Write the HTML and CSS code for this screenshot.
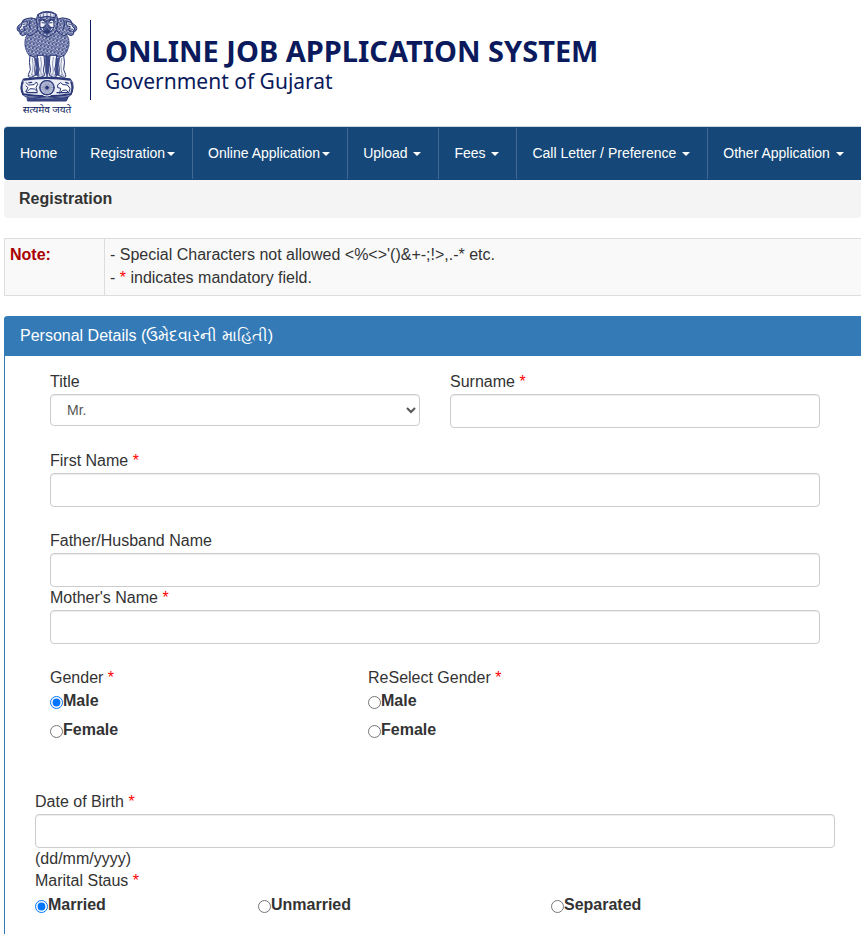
FILE: index.html
```html
<!DOCTYPE html>
<html lang="en">
<head>
<meta charset="utf-8">
<title>Online Job Application System</title>
<link rel="stylesheet" href="styles.css">
</head>
<body>
<header class="masthead">
  <div class="emblem">
    <svg class="emblem-art" viewBox="48 30 186 276" fill="none" stroke="#2a3878" stroke-width="3" stroke-linecap="round" stroke-linejoin="round" aria-hidden="true">
      <defs>
        <pattern id="mane" width="11" height="12" patternUnits="userSpaceOnUse" patternTransform="rotate(12)">
          <rect width="11" height="12" fill="#3d4a88" stroke="none"/>
          <path d="M1 1l4 6 5-6M0 8l3 3M11 8l-3 3" stroke="#e3e6f1" stroke-width="2.4"/>
        </pattern>
      </defs>
      <path d="M84 100Q72 113 75 138Q78 158 90 170L190 170Q203 157 207 138Q210 113 196 100L170 76L112 76Z" fill="url(#mane)" stroke-width="2"/>
      <path d="M111 58Q94 50 79 56Q68 57 65 69L54 78Q49 85 53 92L59 95Q58 105 68 107L80 102Q89 112 101 101L114 91Z" fill="url(#mane)"/>
      <path d="M171 58Q187 50 202 56Q213 57 216 69L228 78Q233 85 228 92L222 95Q223 105 213 107L202 102Q192 112 181 101L168 91Z" fill="url(#mane)"/>
      <path d="M68 67L82 65L80 77L70 80L75 91L63 94L57 87L63 80ZM213 67L199 65L201 77L211 80L206 91L218 94L225 87L218 80Z" fill="#eef0f7"/>
      <path d="M69 73l7-1M63 88l8-1M213 73l-7-1M219 88l-8-1M90 62q-7 13 1 25M191 62q7 13-1 25"/>
      <path d="M114 43Q126 33 141 35Q157 33 169 43L174 61L170 89Q161 107 141 111Q121 106 113 89L109 61Z" fill="url(#mane)"/>
      <path d="M116 43Q141 30 167 43L165 53Q141 45 118 53Z" fill="#e4e7f2"/>
      <path d="M121 45v6M130 41v7M141 40v8M152 41v7M162 45v6" stroke-width="2"/>
      <path d="M121 57L138 60L138 75L131 80Q126 89 135 91L141 88L147 91Q157 89 151 80L144 75L144 60L161 57L162 79Q156 98 141 99Q126 98 120 79Z" fill="#f4f5fa"/>
      <path d="M121 62Q130 56 136 66M146 66Q152 56 161 62" stroke-width="4"/>
      <path d="M126 68l8 1M148 69l8-1M135 76q6 7 12 0M124 82q8 0 17 3 9-3 17-3" stroke-width="3"/>
      <path d="M130 93Q141 88 152 93L148 98Q141 101 134 98Z" fill="#2a3878"/>
      <path d="M90 166L104 173Q108 192 104 209L106 226L91 233Q82 232 85 224L91 209Q86 187 90 166ZM191 166L178 173Q174 192 178 209L176 226L191 233Q200 232 197 224L191 209Q196 187 191 166Z" fill="#f3f5fa"/>
      <path d="M112 166L132 166Q137 190 130 211L134 226L120 233Q110 231 113 223L118 209Q112 188 112 166ZM170 166L150 166Q145 190 152 211L148 226L162 233Q172 231 169 223L164 209Q170 188 170 166Z" fill="#f3f5fa"/>
      <path d="M136 168L136 214L141 231L147 214L147 168ZM105 174L109 202L105 226L116 226L114 175ZM177 174L174 202L177 226L166 226L168 175Z" fill="#3d4a88" stroke="#3d4a88" stroke-width="2"/>
      <path d="M97 175q4 20 1 38l-4 12M185 175q-4 20-1 38l4 12M122 172q5 20 0 41l2 12M160 172q-5 20 0 41l-2 12M89 226l2 5M98 223l1 6M191 226l-2 5M184 223l-1 6M119 224l1 6M128 222l1 6M163 224l-1 6M154 222l-1 6" stroke-width="1.5"/>
      <path d="M71 237Q141 226 211 237L218 248Q222 264 216 278L207 290Q141 298 75 290L65 278Q60 264 65 248Z" fill="#eceef6" stroke-width="3"/>
      <path d="M72 239Q141 229 210 239M69 283Q141 295 212 283" stroke-width="6"/>
      <path d="M69 246Q61 262 69 281M213 246Q220 262 213 281" stroke-width="5"/>
      <circle cx="141" cy="263" r="25" fill="#3d4a88" stroke="#f3f5fa" stroke-width="3"/>
      <circle cx="141" cy="263" r="21" fill="#c3c8de" stroke-width="3"/>
      <path d="M141 243v40M121 263h40M127 249l28 28M127 277l28-28M133 244l16 38M149 244l-16 38M122 255l38 16M122 271l38-16" stroke-width="1"/>
      <circle cx="141" cy="263" r="4" fill="#2a3878"/>
      <path d="M78 248l8 7 16-1 7-8 4 7-5 9 4 13-8-8-14-1-9 9-4 0 7-12-6-5M174 254l8-6 7 6 13 1 8 10-4 14-7-9-11 1-9 9 3-15-8-2Z" fill="#fff" stroke-width="3"/>
      <path d="M81 278h30M171 278h31M87 248l8-1M197 247l8 3" stroke-width="4"/>
      <path d="M82 293Q141 302 204 292L199 303H84Z" fill="#3d4a88"/>
    </svg>
    <span class="motto" lang="hi">सत्यमेव जयते</span>
  </div>
  <div class="brand">
    <h1 class="brand-name">ONLINE JOB APPLICATION SYSTEM</h1>
    <p class="brand-sub">Government of Gujarat</p>
  </div>
</header>

<nav class="navbar">
  <a href="#">Home</a>
  <a href="#">Registration<span class="caret"></span></a>
  <a href="#">Online Application<span class="caret"></span></a>
  <a href="#">Upload <span class="caret"></span></a>
  <a href="#">Fees <span class="caret"></span></a>
  <a href="#">Call Letter / Preference <span class="caret"></span></a>
  <a href="#">Other Application <span class="caret"></span></a>
</nav>

<main>
  <h2 class="page-title">Registration</h2>

  <table class="note">
    <tr>
      <th scope="row">Note:</th>
      <td>- Special Characters not allowed &lt;%&lt;&gt;'()&amp;+-;!&gt;,.-* etc.<br>- <span class="req">*</span> indicates mandatory field.</td>
    </tr>
  </table>

  <form class="panel">
    <h3 class="panel-heading">Personal Details (<span lang="gu">ઉમેદવારની માહિતી</span>)</h3>
    <div class="panel-body">
      <div class="inset">
        <div class="two-up">
          <div class="field">
            <label for="title">Title</label>
            <select id="title" class="control"><option>Mr.</option></select>
          </div>
          <div class="field">
            <label for="surname">Surname <span class="req">*</span></label>
            <input id="surname" class="control" type="text">
          </div>
        </div>
        <div class="field">
          <label for="first">First Name <span class="req">*</span></label>
          <input id="first" class="control" type="text">
        </div>
        <div class="parents">
          <div class="field">
            <label for="father">Father/Husband Name</label>
            <input id="father" class="control" type="text">
          </div>
          <div class="field">
            <label for="mother">Mother's Name <span class="req">*</span></label>
            <input id="mother" class="control" type="text">
          </div>
        </div>
        <div class="genders">
          <fieldset>
            <legend>Gender <span class="req">*</span></legend>
            <label class="choice"><input type="radio" name="gender" checked>Male</label>
            <label class="choice"><input type="radio" name="gender">Female</label>
          </fieldset>
          <fieldset>
            <legend>ReSelect Gender <span class="req">*</span></legend>
            <label class="choice"><input type="radio" name="gender2">Male</label>
            <label class="choice"><input type="radio" name="gender2">Female</label>
          </fieldset>
        </div>
      </div>
      <div class="field">
        <label for="dob">Date of Birth <span class="req">*</span></label>
        <input id="dob" class="control" type="text">
        <span class="hint">(dd/mm/yyyy)</span>
      </div>
      <fieldset>
        <legend>Marital Staus <span class="req">*</span></legend>
        <div class="marital">
          <label class="choice"><input type="radio" name="marital" checked>Married</label>
          <label class="choice"><input type="radio" name="marital">Unmarried</label>
          <label class="choice"><input type="radio" name="marital">Separated</label>
        </div>
      </fieldset>
    </div>
  </form>
</main>
</body>
</html>
```
FILE: styles.css
```css
* {
  box-sizing: border-box;
}

body {
  margin: 0;
  padding-left: 4px;
  overflow-x: hidden;
  background: #fff;
  color: #333;
  font-family: "Liberation Sans", Arial, sans-serif;
  font-size: 16px;
  line-height: 22px;
}

h1, h2, h3, p {
  margin: 0;
}

.masthead {
  display: flex;
  align-items: flex-start;
  height: 126px;
  padding: 10px 0 0 12px;
  color: #0a1a5c;
}

.emblem {
  display: flex;
  flex-direction: column;
  align-items: center;
  width: 62px;
}

.emblem-art {
  display: block;
  width: 62px;
  height: 92px;
}

.motto {
  font-family: "Noto Sans Devanagari", "Noto Sans", sans-serif;
  font-size: 10px;
  line-height: 18px;
  white-space: nowrap;
}

.brand {
  margin: 10px 0 0 12px;
  padding: 14px 0 0 14px;
  height: 80px;
  border-left: 1px solid #0a1a5c;
  font-family: "Noto Sans", "Open Sans", sans-serif;
  white-space: nowrap;
}

.brand-name {
  font-size: 29px;
  font-weight: 700;
  line-height: 34px;
}

.brand-sub {
  font-size: 21px;
  line-height: 26px;
}

.navbar {
  display: flex;
  height: 54px;
  padding: 1px;
  overflow: hidden;
  border-top: 1px solid #d0d7de;
  border-radius: 4px 0 0 4px;
  background: #154878;
}

.navbar a {
  flex: none;
  padding: 0 17px 0 15px;
  border-right: 1px solid #416a93;
  color: #fff;
  font-size: 14px;
  line-height: 50px;
  text-decoration: none;
  white-space: nowrap;
}

.navbar a:last-child {
  border-right: 0;
}

.caret {
  display: inline-block;
  margin-left: 2px;
  vertical-align: middle;
  border-top: 4px solid #fff;
  border-right: 4px solid transparent;
  border-left: 4px solid transparent;
}

.page-title {
  padding: 8px 15px;
  border-radius: 4px;
  background: #f4f4f4;
  font-size: 16px;
  line-height: 22px;
}

.note {
  width: 100%;
  margin: 20px 0;
  border: 1px solid #ddd;
  border-right: 0;
  border-spacing: 0;
  background: #f9f9f9;
  line-height: 23px;
}

.note th,
.note td {
  padding: 4px 5px 6px;
  text-align: left;
  vertical-align: top;
}

.note th {
  width: 100px;
  border-right: 1px solid #ddd;
  color: #a90000;
}

.req {
  color: #f00;
}

.panel {
  border-left: 1px solid #337ab7;
  border-radius: 4px 0 0 0;
}

.panel-heading {
  height: 40px;
  margin-left: -1px;
  padding: 0 16px;
  border-radius: 4px 0 0 0;
  background: #337ab7;
  color: #fff;
  font-size: 16px;
  font-weight: 400;
  line-height: 40px;
}

.panel-body {
  padding: 15px 26px 20px 30px;
}

.inset {
  padding: 0 15px;
}

.two-up {
  display: grid;
  grid-template-columns: 1fr 1fr;
  gap: 30px;
  margin-bottom: 22px;
}

.field label {
  display: block;
  margin-bottom: 1px;
}

.control {
  display: block;
  width: 100%;
  height: 34px;
  padding: 6px 12px;
  border: 1px solid #ccc;
  border-radius: 4px;
  background-color: #fff;
  box-shadow: inset 0 1px 1px rgba(0, 0, 0, 0.075);
  color: #555;
  font-family: inherit;
  font-size: 14px;
}

select.control {
  height: 32px;
  padding: 0 0 0 12px;
}

.parents {
  margin: 23px 0;
}

.hint {
  display: block;
}

fieldset {
  min-width: 0;
  margin: 0;
  padding: 0;
  border: 0;
}

legend {
  margin-bottom: 1px;
  padding: 0;
}

.genders {
  display: grid;
  grid-template-columns: 318px 1fr;
  margin-bottom: 43px;
}

.choice {
  display: flex;
  align-items: center;
  font-weight: 700;
}

.choice input {
  width: 13px;
  height: 13px;
  margin: 3px 0 0;
}

.genders .choice {
  margin-bottom: 7px;
}

.marital {
  display: grid;
  grid-template-columns: 223px 293px 1fr;
  padding-top: 1px;
}
```
